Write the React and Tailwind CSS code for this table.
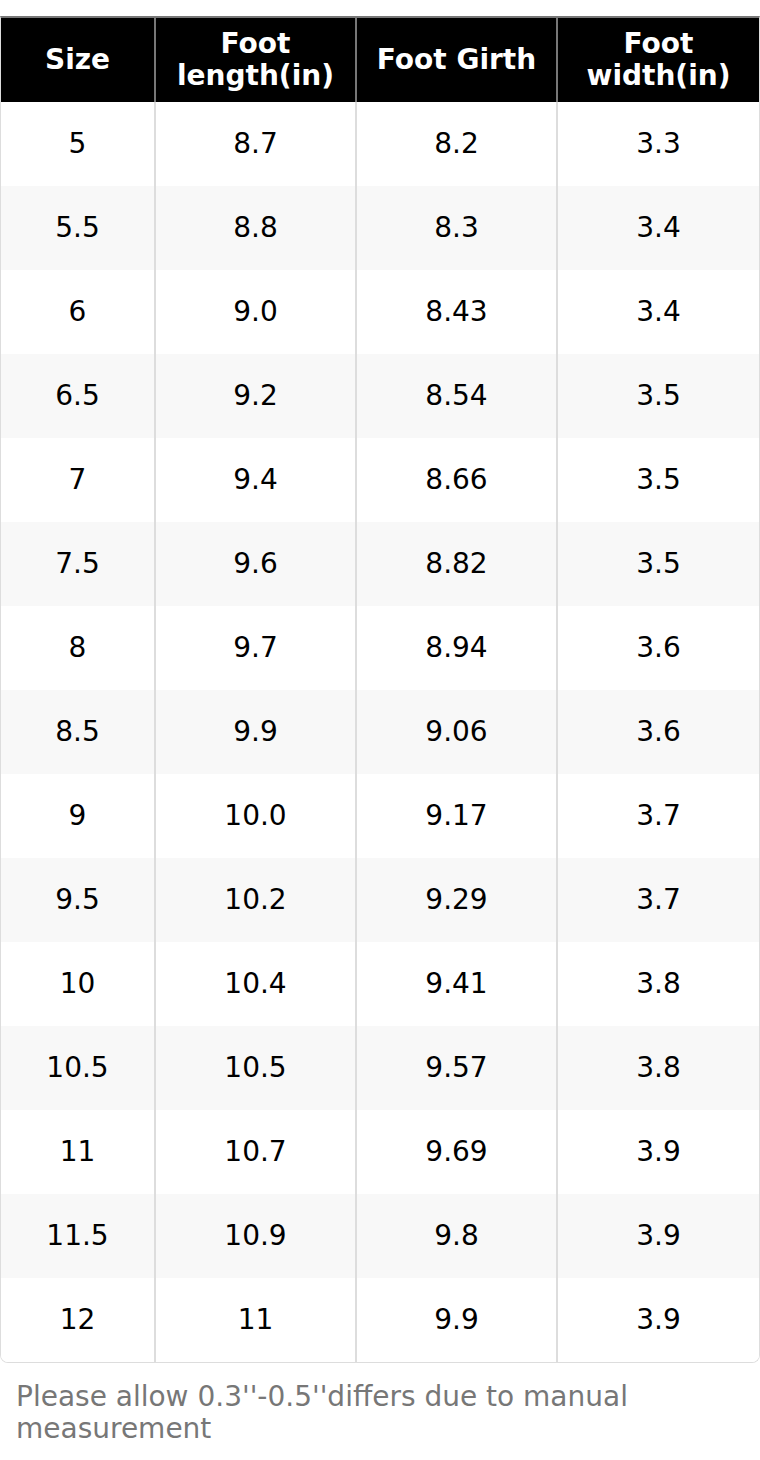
const rows = [
  ["5", "8.7", "8.2", "3.3"],
  ["5.5", "8.8", "8.3", "3.4"],
  ["6", "9.0", "8.43", "3.4"],
  ["6.5", "9.2", "8.54", "3.5"],
  ["7", "9.4", "8.66", "3.5"],
  ["7.5", "9.6", "8.82", "3.5"],
  ["8", "9.7", "8.94", "3.6"],
  ["8.5", "9.9", "9.06", "3.6"],
  ["9", "10.0", "9.17", "3.7"],
  ["9.5", "10.2", "9.29", "3.7"],
  ["10", "10.4", "9.41", "3.8"],
  ["10.5", "10.5", "9.57", "3.8"],
  ["11", "10.7", "9.69", "3.9"],
  ["11.5", "10.9", "9.8", "3.9"],
  ["12", "11", "9.9", "3.9"],
];

const headers = ["Size", "Foot\nlength(in)", "Foot Girth", "Foot\nwidth(in)"];

const cols = "grid grid-cols-[153px_201px_201px_1fr]";

export default function App() {
  return (
    <div
      className="w-[760px] pt-4 bg-white text-black"
      style={{ fontFamily: '"DejaVu Sans", sans-serif' }}
    >
      <div className="border border-t-2 border-[#ddd] border-t-[#777] rounded-b-lg overflow-hidden">
        <div className={`${cols} bg-black text-white font-bold text-[28px] leading-[32px] h-[84px]`}>
          {headers.map((h, i) => (
            <div
              key={i}
              className={`flex items-center justify-center text-center whitespace-pre-line ${
                i > 0 ? "border-l-2 border-[#777]" : ""
              }`}
            >
              {h}
            </div>
          ))}
        </div>
        {rows.map((r, ri) => (
          <div
            key={ri}
            className={`${cols} h-[84px] text-[28px] ${ri % 2 ? "bg-[#f8f8f8]" : "bg-white"}`}
          >
            {r.map((c, ci) => (
              <div
                key={ci}
                className={`flex items-center justify-center ${
                  ci > 0 ? "border-l-2 border-[#ddd]" : ""
                }`}
              >
                {c}
              </div>
            ))}
          </div>
        ))}
      </div>
      <p className="px-4 pt-[18px] text-[28px] leading-[32px] text-[#777]">
        Please allow 0.3''-0.5''differs due to manual measurement
      </p>
    </div>
  );
}
